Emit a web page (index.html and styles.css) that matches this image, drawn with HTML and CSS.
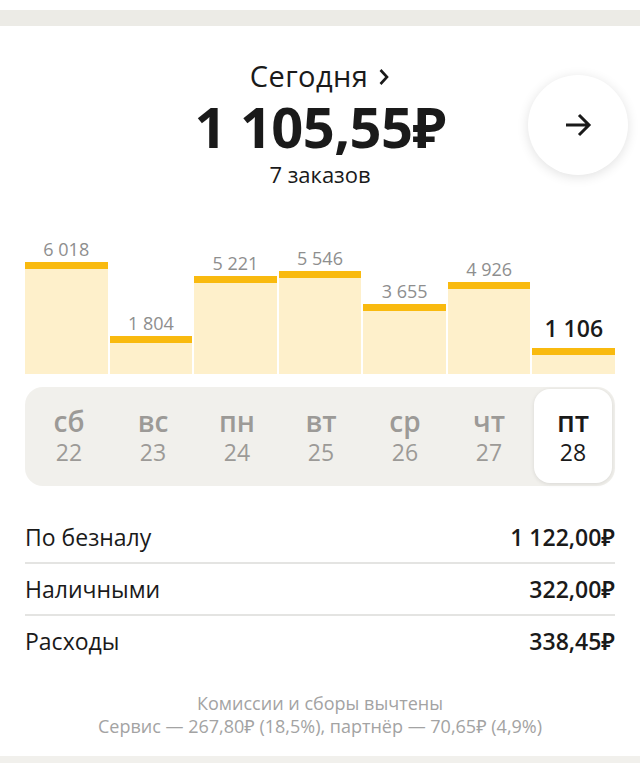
FILE: index.html
```html
<!DOCTYPE html>
<html>
<head>
    <title>Заработок</title>
    <meta charset="utf-8">
    <link rel="stylesheet" href="styles.css">
</head>
<body>
    <div class="topbar"></div>
    <div class="card">
        <div class="header">
            <div class="title">Сегодня
                <svg class="chevron" width="12" height="18" viewBox="0 0 12 18">
                    <path d="M2.5 2 L9 9 L2.5 16" fill="none" stroke="#1a1a1a" stroke-width="2.6"/>
                </svg>
            </div>
            <div class="amount">1 105,55₽</div>
            <div class="orders">7 заказов</div>
            <button class="next-btn">
                <svg width="28" height="26" viewBox="0 0 28 26">
                    <path d="M2 13 H25 M15 3 L25 13 L15 23" fill="none" stroke="#1a1a1a" stroke-width="3"/>
                </svg>
            </button>
        </div>

        <div class="chart">
            <div class="col"><span class="val">6 018</span><div class="bar" style="height: 112px"></div></div>
            <div class="col"><span class="val">1 804</span><div class="bar" style="height: 38px"></div></div>
            <div class="col"><span class="val">5 221</span><div class="bar" style="height: 98px"></div></div>
            <div class="col"><span class="val">5 546</span><div class="bar" style="height: 103px"></div></div>
            <div class="col"><span class="val">3 655</span><div class="bar" style="height: 70px"></div></div>
            <div class="col"><span class="val">4 926</span><div class="bar" style="height: 92px"></div></div>
            <div class="col current"><span class="val">1 106</span><div class="bar" style="height: 26px"></div></div>
        </div>

        <div class="days">
            <div class="day"><span class="dname">сб</span><span class="dnum">22</span></div>
            <div class="day"><span class="dname">вс</span><span class="dnum">23</span></div>
            <div class="day"><span class="dname">пн</span><span class="dnum">24</span></div>
            <div class="day"><span class="dname">вт</span><span class="dnum">25</span></div>
            <div class="day"><span class="dname">ср</span><span class="dnum">26</span></div>
            <div class="day"><span class="dname">чт</span><span class="dnum">27</span></div>
            <div class="day active"><span class="dname">пт</span><span class="dnum">28</span></div>
        </div>

        <div class="rows">
            <div class="row"><span>По безналу</span><span class="sum">1 122,00₽</span></div>
            <div class="row"><span>Наличными</span><span class="sum">322,00₽</span></div>
            <div class="row last"><span>Расходы</span><span class="sum">338,45₽</span></div>
        </div>

        <div class="note">
            Комиссии и сборы вычтены<br>
            Сервис — 267,80₽ (18,5%), партнёр — 70,65₽ (4,9%)
        </div>
    </div>
    <div class="bottombar"></div>
</body>
</html>
```

FILE: styles.css
```css
body {
    margin: 0;
    background: #fff;
    font-family: "Open Sans", "Noto Sans", sans-serif;
    color: #1a1a1a;
}

.topbar {
    margin-top: 10px;
    height: 16px;
    background: #ecebe6;
}

.card {
    padding: 0 25px;
}

.header {
    position: relative;
    text-align: center;
    padding-top: 30px;
    height: 178px;
}

.title {
    font-size: 29px;
    line-height: 40px;
    letter-spacing: 0.4px;
}

.chevron {
    vertical-align: 1px;
    margin-left: 2px;
}

.amount {
    font-size: 56px;
    font-weight: 700;
    line-height: 60px;
    letter-spacing: -0.6px;
}

.orders {
    margin-top: 3px;
    font-size: 22px;
    line-height: 30px;
}

.next-btn {
    position: absolute;
    right: -13px;
    top: 49px;
    width: 100px;
    height: 100px;
    border: none;
    border-radius: 50%;
    background: #fff;
    box-shadow: 0 2px 12px rgba(0, 0, 0, 0.12);
    display: flex;
    align-items: center;
    justify-content: center;
    padding: 0;
}

.chart {
    display: flex;
    gap: 2px;
    height: 140px;
    align-items: flex-end;
}

.col {
    flex: 1;
    display: flex;
    flex-direction: column;
    align-items: center;
}

.val {
    font-size: 18px;
    color: #8e8e8e;
    line-height: 20px;
    margin-bottom: 3px;
}

.col.current .val {
    font-size: 23px;
    font-weight: 600;
    color: #1a1a1a;
    line-height: 26px;
    margin-bottom: 7px;
}

.bar {
    width: 100%;
    box-sizing: border-box;
    background: #fef0cb;
    border-top: 7px solid #f9ba0f;
}

.days {
    margin-top: 13px;
    height: 99px;
    box-sizing: border-box;
    background: #f1f0ec;
    border-radius: 18px;
    display: flex;
    padding: 2px 0 3px 2px;
}

.day {
    flex: 1;
    display: flex;
    flex-direction: column;
    align-items: center;
    justify-content: center;
    color: #9c9a97;
    margin: 0 3px;
}

.day.active {
    background: #fff;
    border-radius: 16px;
    color: #1a1a1a;
    box-shadow: 0 1px 4px rgba(0, 0, 0, 0.1);
}

.dname {
    font-size: 28px;
    font-weight: 600;
    line-height: 32px;
}

.dnum {
    font-size: 23px;
    line-height: 30px;
}

.rows {
    margin-top: 26px;
}

.row {
    display: flex;
    justify-content: space-between;
    align-items: center;
    height: 50px;
    border-bottom: 2px solid #e4e4e2;
    font-size: 23px;
}

.row.last {
    border-bottom: none;
}

.sum {
    font-weight: 600;
}

.note {
    margin-top: 26px;
    text-align: center;
    font-size: 18px;
    line-height: 23px;
    color: #a3a3a3;
}

.bottombar {
    margin-top: 18px;
    height: 10px;
    background: #f1f0ec;
}
```
